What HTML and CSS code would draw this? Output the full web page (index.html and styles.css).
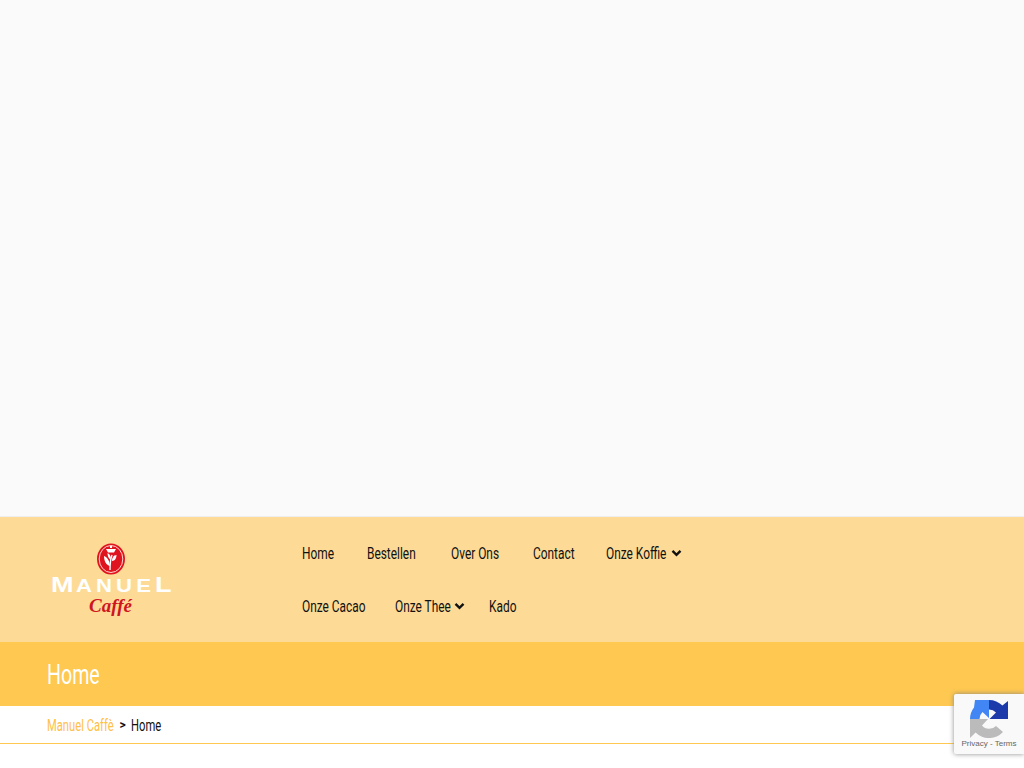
FILE: index.html
```html
<!DOCTYPE html>
<html lang="nl">
<head>
<meta charset="utf-8">
<title>Manuel Caffè</title>
<link rel="stylesheet" href="styles.css">
</head>
<body>
<div class="hero"></div>
<header class="header">
  <a class="logo" href="#">
    <svg class="emblem" width="28" height="32" viewBox="0 0 28 32">
      <ellipse cx="14" cy="16" rx="14" ry="15.500" fill="#e0141f"/>
      <ellipse cx="14" cy="16" rx="11.800" ry="13.500" fill="none" stroke="#fbd6cf" stroke-width="1"/>
      <path d="M13 27c0-6 0-10 2-15" fill="none" stroke="#fff" stroke-width="1.400"/>
      <path d="M13 23c-4-1-6-5-6-10 3 1 6 5 6 10zM13.500 17c-2-2-3-4-3-7 2 1 4 3 3 7zM15 18c3 0 4.500-3 4.500-6-3 0-4.500 3-4.500 6z" fill="#fff"/>
      <path d="M9 6h10l-2 3.500h-6zM13 3h2v2h-2z" fill="#fff"/>
    </svg>
    <span class="brand"><span class="cap">M</span>ANUE<span class="cap">L</span></span>
    <span class="sub">Caffé</span>
  </a>
  <nav class="nav">
    <div class="row">
      <a class="item w-home" href="#"><span class="t">Home</span></a>
      <a class="item w-best" href="#"><span class="t">Bestellen</span></a>
      <a class="item w-over" href="#"><span class="t">Over Ons</span></a>
      <a class="item w-cont" href="#"><span class="t">Contact</span></a>
      <a class="item w-koffie" href="#"><span class="t">Onze Koffie</span><svg class="chev" width="11" height="8" viewBox="0 0 11 8"><path d="M1.500 1.800 5.500 5.800 9.500 1.800" fill="none" stroke="#111" stroke-width="2.400"/></svg></a>
    </div>
    <div class="row">
      <a class="item w-cacao" href="#"><span class="t">Onze Cacao</span></a>
      <a class="item w-thee" href="#"><span class="t">Onze Thee</span><svg class="chev" width="11" height="8" viewBox="0 0 11 8"><path d="M1.500 1.800 5.500 5.800 9.500 1.800" fill="none" stroke="#111" stroke-width="2.400"/></svg></a>
      <a class="item w-kado" href="#"><span class="t">Kado</span></a>
    </div>
  </nav>
</header>
<section class="title-bar"><h1><span class="t">Home</span></h1></section>
<div class="crumbs">
  <a class="c-link" href="#"><span class="t">Manuel Caffè</span></a>
  <span class="sep">&gt;</span>
  <span class="c-cur"><span class="t">Home</span></span>
</div>
<div class="recaptcha">
  <svg class="rc-icon" width="38" height="38" viewBox="0 0 38 38">
    <path d="M0 19H18L12 25.500A9.500 9.500 0 0 0 26 26L33 32A19 19 0 0 1 5.600 32.400L0 38Z" fill="#bbb"/>
    <path d="M0 19A19 19 0 0 1 4 7.500L5 0H19V18L12.500 12A9.500 9.500 0 0 0 9.500 19Z" fill="#4285f4"/>
    <path d="M19 0A19 19 0 0 1 32.400 5.600L38 1V19H19.500L26 12.500A9.500 9.500 0 0 0 19 9.500Z" fill="#1c3aa9"/>
  </svg>
  <div class="rc-links">Privacy - Terms</div>
</div>
</body>
</html>
```
FILE: styles.css
```css
* { box-sizing: border-box; }
html, body { margin: 0; padding: 0; }
body {
  height: 768px;
  overflow: hidden;
  background: #fff;
  font-family: Roboto, "Liberation Sans", sans-serif;
  color: #111;
}
a { color: inherit; text-decoration: none; }
.t { display: inline-block; width: 0; white-space: nowrap; transform: scaleX(.7); transform-origin: left center; }
.hero { height: 517px; background: #fafafa; border-bottom: 1px solid #eee; }
.header {
  height: 125px;
  background: #fddb97;
  display: flex;
  padding-left: 51px;
}
.logo {
  width: 234px;
  padding-top: 26px;
  display: flex;
  flex-direction: column;
  align-items: flex-start;
}
.emblem { margin-left: 46px; display: block; }
.brand {
  font: bold 18px/18px "Liberation Sans", sans-serif;
  letter-spacing: 3.300px;
  color: #fff;
  margin-top: 1px;
  white-space: nowrap;
  transform: scaleX(1.23);
  transform-origin: left center;
}
.cap { font-size: 22px; letter-spacing: 2px; }
.sub {
  margin: 1px 0 0 38px;
  font: italic bold 19px/19px "Liberation Serif", serif;
  color: #cf1520;
}
.nav { padding: 11px 0 0 17px; }
.row { display: flex; height: 53px; align-items: center; }
.item { font-size: 17px; line-height: 53px; display: flex; align-items: center; position: relative; top: -1px; }
.w-home { width: 31px; margin-right: 34px; }
.w-best { width: 51px; margin-right: 33px; }
.w-over { width: 49px; margin-right: 33px; }
.w-cont { width: 43px; margin-right: 30px; }
.w-koffie { width: 76px; }
.w-cacao { width: 63px; margin-right: 30px; }
.w-thee { width: 70px; margin-right: 24px; }
.w-kado { width: 27px; }
.chev { margin: -1px 0 0 auto; }
.title-bar { height: 64px; background: #ffc850; padding: 2px 0 0 47px; display: flex; align-items: center; }
.title-bar h1 { margin: 0; color: #fff; font-size: 28px; font-weight: 400; line-height: 34px; }
.crumbs {
  height: 38px;
  padding: 1px 0 0 47px;
  display: flex;
  align-items: center;
  font-size: 16px;
  color: #111;
  border-bottom: 1px solid #ffc850;
}
.c-link { width: 67px; color: #ffc04a; }
.c-cur { width: 30px; }
.sep { width: 17px; text-align: center; font-size: 12px; font-weight: 700; }
.recaptcha {
  position: absolute;
  left: 954px;
  top: 694px;
  width: 70px;
  height: 60px;
  background: #f9f9f9;
  border-radius: 2px 0 0 2px;
  box-shadow: 0 0 5px rgba(128,128,128,.9);
  display: flex;
  flex-direction: column;
  align-items: center;
}
.rc-icon { margin-top: 6px; }
.rc-links { font: 8px/10px "Liberation Sans", sans-serif; color: #666; margin-top: 1px; white-space: nowrap; }
```
